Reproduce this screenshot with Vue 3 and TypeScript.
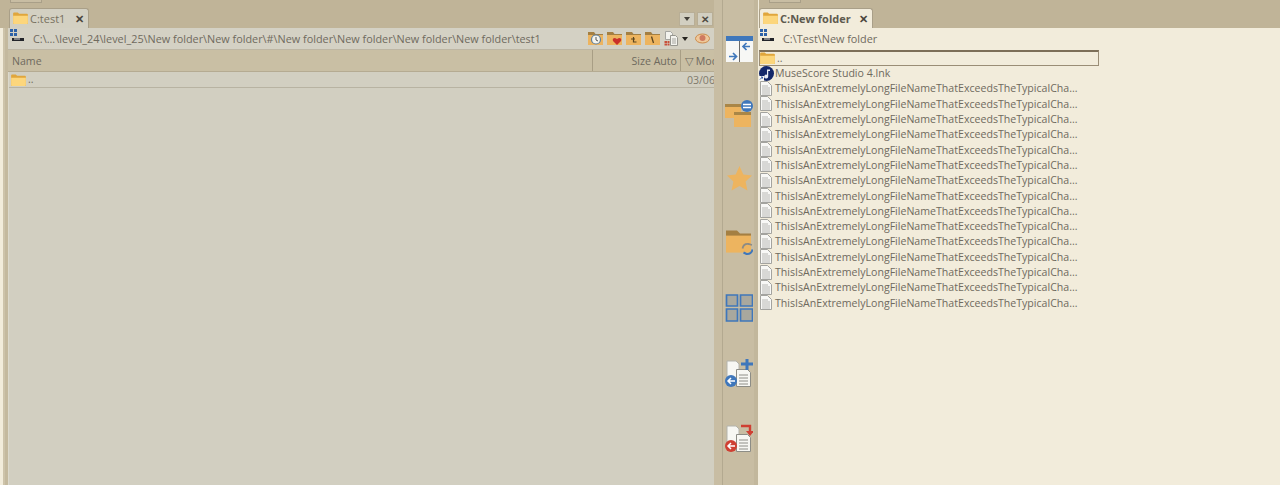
<script setup lang="ts">
const fileName = 'ThisIsAnExtremelyLongFileNameThatExceedsTheTypicalCha...'
const files = Array.from({ length: 15 }, (_, i) => ({ id: i, name: fileName }))
</script>

<template>
  <div class="app">
    <svg class="defs" width="0" height="0">
      <defs>
        <symbol id="folder" viewBox="0 0 16 13">
          <path d="M0 1.5Q0 .5 1 .5h4l1.500 1.500H15q1 0 1 1V12q0 1-1 1H1q-1 0-1-1z" fill="#e0a63c" />
          <path d="M0 4h16v8q0 1-1 1H1q-1 0-1-1z" fill="#fcd67c" />
        </symbol>
        <symbol id="doc" viewBox="0 0 12 15">
          <path d="M.5.5h7l4 4v10H.5z" fill="#f8f8f6" stroke="#a3a39f" />
          <path d="M2 5h6M2 7h8M2 9h8M2 11h8M2 13h8" stroke="#b8b8b5" />
        </symbol>
        <symbol id="tool-folder" viewBox="0 0 15 13">
          <path d="M0 0h6l1.500 2H15v2H0z" fill="#a47f42" />
          <path d="M0 3h15v10H0z" fill="#edb45f" />
        </symbol>
        <symbol id="drive" viewBox="0 0 14 14">
          <path d="M0 0h3v3H0zM4 0h3v3H4zM0 4h3v3H0zM4 4h3v3H4z" fill="#2e62a8" />
          <path d="M2 9h12v3H2z" fill="#22242a" />
          <path d="M4 10h6" stroke="#d9d9d9" />
        </symbol>
      </defs>
    </svg>

    <section class="pane left">
      <div class="tabbar">
        <span class="stub"></span>
        <div class="tab">
          <svg class="tab-folder"><use href="#folder" /></svg>
          <span>C:test1</span>
          <b class="close">✕</b>
        </div>
        <div class="win-buttons">
          <span class="win-btn"><i class="caret"></i></span>
          <span class="win-btn"><b>✕</b></span>
        </div>
      </div>

      <div class="pathbar">
        <svg class="drive"><use href="#drive" /></svg>
        <span class="path">C:\...\level_24\level_25\New folder\New folder\#\New folder\New folder\New folder\New folder\test1</span>
        <div class="tools">
          <svg class="tool" viewBox="0 0 15 13">
            <use href="#tool-folder" width="15" height="13" />
            <circle cx="8" cy="7.500" r="4.500" fill="#f4f4ee" stroke="#5e7f9c" stroke-width="1.200" />
            <path d="M8 5v3l2 1" fill="none" stroke="#555" />
          </svg>
          <svg class="tool" viewBox="0 0 15 13">
            <use href="#tool-folder" width="15" height="13" />
            <path d="M10 13 6 9q-1-3 2-3l2 1 2-1q3 0 2 3z" fill="#c9302a" />
          </svg>
          <svg class="tool" viewBox="0 0 15 13">
            <use href="#tool-folder" width="15" height="13" />
            <path d="M7.500 5v5h3M5 7h4" fill="none" stroke="#5a4520" stroke-width="1.200" />
          </svg>
          <svg class="tool" viewBox="0 0 15 13">
            <use href="#tool-folder" width="15" height="13" />
            <path d="M6.500 4.500 8.500 11" fill="none" stroke="#5a4520" stroke-width="1.300" />
          </svg>
          <svg class="tool docs" viewBox="0 0 15 15">
            <path d="M1.500.5h5l2 2v6h-7z" fill="#f3f3ee" stroke="#a5a5a0" />
            <path d="M6.500 4.500h5l2 2v8h-7z" fill="#f3f3ee" stroke="#96968f" />
            <path d="M8 8h4M8 10h4M8 12h4" stroke="#a5a5a0" />
            <path d="M.5 10h2.500v2H.5zM3.500 10h2v2h-2zM.5 12.500h2.500v2H.5zM3.500 12.500h2v2h-2z" fill="#c8503a" />
          </svg>
          <i class="caret small"></i>
          <svg class="tool eye" viewBox="0 0 15 11">
            <ellipse cx="7.500" cy="5.500" rx="7" ry="4.500" fill="#eec89a" stroke="#cc8a4a" />
            <circle cx="7.500" cy="5" r="3" fill="#cf7a60" />
          </svg>
        </div>
      </div>

      <div class="head">
        <span class="head-name">Name</span>
        <span class="head-size">Size Auto</span>
        <span class="head-mod">▽ Mod</span>
      </div>

      <div class="list-left">
        <div class="row-left">
          <svg class="row-folder"><use href="#folder" /></svg>
          <span class="dots">..</span>
          <span class="date">03/06</span>
        </div>
      </div>
    </section>

    <aside class="middle">
      <svg class="mid-icon" viewBox="0 0 28 28">
        <path d="M1 5h27v22H1z" fill="#f7f7f5" />
        <path d="M1 1h27v5H1z" fill="#3f77bb" />
        <path d="M14.500 6v21" stroke="#6a6a6a" />
        <path d="M4 21.500h7M8 18l3.500 3.500L8 25M25 11.500h-7M21.500 8 18 11.500l3.500 3.500" fill="none" stroke="#3f77bb" stroke-width="1.700" />
      </svg>
      <svg class="mid-icon" viewBox="0 0 28 28">
        <path d="M0 4h16v3H0zM9 12h17v3H9z" fill="#a98647" />
        <path d="M0 7h9v11H0zM9 7h7v5H9z" fill="#edb45f" />
        <path d="M9 15h17v12H9z" fill="#edb45f" />
        <circle cx="22" cy="6" r="6" fill="#3f77bb" />
        <path d="M18 4.500h8M18 7.500h8" stroke="#fff" stroke-width="1.600" />
      </svg>
      <svg class="mid-icon" viewBox="0 0 28 28">
        <path d="m14.500 1 3.800 8.400 8.700 1-6.400 6 1.800 9-7.900-4.400-7.900 4.400 1.800-9-6.400-6 8.700-1z" fill="#edb45f" />
      </svg>
      <svg class="mid-icon" viewBox="0 0 28 28">
        <path d="M1 1.600h11l3 3h11v4H1z" fill="#a47f42" />
        <path d="M1 6.600h25v17H1z" fill="#edb45f" />
        <path d="M17.500 19.500q1-5 6-4.500l3.500 1" fill="none" stroke="#8b8b86" stroke-width="1.800" />
        <path d="M27.500 20.500q-1 5-6 4.500l-3-1.500" fill="none" stroke="#3f77bb" stroke-width="2" />
      </svg>
      <svg class="mid-icon" viewBox="0 0 28 28">
        <path d="M1.500 1h11v11h-11zM15.500 1h12v11h-12zM1.500 15h11v12h-11zM15.500 15h12v12h-12z" fill="#a9a89e" stroke="#3f77bb" stroke-width="1.700" />
      </svg>
      <svg class="mid-icon" viewBox="0 0 28 28">
        <path d="M2 2h9l3 3v15H2z" fill="#f7f7f3" stroke="#b3b3ac" />
        <path d="M11.500 10.500h11l3 3v14h-14z" fill="#f7f7f3" stroke="#8d8d86" />
        <path d="M14 16h9M14 19h9M14 22h9M14 25h9" stroke="#8e8e88" />
        <path d="M16 5h12M22 0v11" stroke="#3f77bb" stroke-width="3" />
        <circle cx="6" cy="22" r="6" fill="#3f77bb" />
        <path d="M10 22H3M6 19l-3 3 3 3" fill="none" stroke="#fff" stroke-width="1.500" />
      </svg>
      <svg class="mid-icon" viewBox="0 0 28 28">
        <path d="M2 2h9l3 3v15H2z" fill="#f7f7f3" stroke="#b3b3ac" />
        <path d="M11.500 10.500h11l3 3v14h-14z" fill="#f7f7f3" stroke="#8d8d86" />
        <path d="M14 16h9M14 19h9M14 22h9M14 25h9" stroke="#8e8e88" />
        <path d="M16 2h9v6" fill="none" stroke="#cf4033" stroke-width="2.400" />
        <path d="m21 7 4 5 4-5z" fill="#cf4033" />
        <circle cx="6" cy="22" r="6" fill="#cf4033" />
        <path d="M10 22H3M6 19l-3 3 3 3" fill="none" stroke="#fff" stroke-width="1.500" />
      </svg>
    </aside>

    <section class="pane right">
      <div class="tabbar">
        <span class="stub"></span>
        <div class="tab active">
          <svg class="tab-folder"><use href="#folder" /></svg>
          <strong>C:New folder</strong>
          <b class="close">✕</b>
        </div>
      </div>
      <div class="pathbar light">
        <svg class="drive"><use href="#drive" /></svg>
        <span class="path">C:\Test\New folder</span>
      </div>
      <div class="list-right">
        <div class="file selected">
          <svg class="row-folder"><use href="#folder" /></svg>
          <span class="dots">..</span>
        </div>
        <div class="file">
          <svg class="file-icon big" viewBox="0 0 15 15">
            <circle cx="7.500" cy="7.500" r="7.500" fill="#14286a" />
            <path d="M8 3.500h3V5H9.200v5.500a2 2 0 1 1-1.200-1.800z" fill="#e8edf5" />
            <path d="M0 10h5v5H0z" fill="#f6f6f2" />
            <path d="m1 13.500 2.500-2.500M2 11h1.500v1.500" fill="none" stroke="#3157a5" />
          </svg>
          <span>MuseScore Studio 4.lnk</span>
        </div>
        <div v-for="file in files" :key="file.id" class="file">
          <svg class="file-icon"><use href="#doc" /></svg>
          <span>{{ file.name }}</span>
        </div>
      </div>
    </section>
  </div>
</template>

<style scoped>
.app {
  width: 1280px;
  height: 485px;
  display: flex;
  overflow: hidden;
  background: #c0b498;
  color: #6f6a5e;
  font-family: "Open Sans", "Liberation Sans", sans-serif;
  font-size: 10.6px;
}
.defs {
  position: absolute;
}
.pane {
  display: flex;
  flex-direction: column;
  height: 485px;
}
.left {
  width: 714px;
  padding-left: 8px;
  box-sizing: border-box;
  background: linear-gradient(90deg, #f2ecdb 0 3px, #cdc3aa 3px 5px, #c4b99e 5px 8px);
}
.right {
  width: 521px;
  background: #f2ecdb;
}
.tabbar {
  position: relative;
  height: 28px;
  flex: none;
  display: flex;
  align-items: flex-end;
  justify-content: space-between;
  margin-left: -8px;
  padding-left: 9px;
  box-sizing: border-box;
  background: #c0b498;
}
.right .tabbar {
  margin-left: 0;
  padding-left: 0;
}
.stub {
  position: absolute;
  left: 10px;
  top: 0;
  width: 32px;
  height: 3px;
  background: #c8bda3;
  border: 1px solid #a99f88;
  border-top: none;
  box-sizing: border-box;
}
.tab {
  width: 80px;
  height: 20px;
  display: flex;
  align-items: center;
  padding: 0 0 1px 3px;
  box-sizing: border-box;
  background: #d3d0c2;
  border: 1px solid #a99f88;
  border-bottom: none;
  border-radius: 3px 3px 0 0;
  font-size: 11px;
  color: #77715f;
}
.tab.active {
  width: 114px;
  background: #f2ecdb;
  color: #5e5a4e;
}
.tab strong {
  font-size: 11px;
}
.tab-folder {
  width: 15px;
  height: 12px;
  margin-right: 2px;
}
.close {
  margin-left: auto;
  margin-right: 4px;
  font-size: 11px;
  color: #4a463c;
}
.win-buttons {
  display: flex;
  gap: 2px;
  height: 14px;
  margin-bottom: 2px;
  padding-right: 1px;
}
.win-btn {
  width: 16px;
  height: 14px;
  display: flex;
  align-items: center;
  justify-content: center;
  background: #d2cfc1;
  border: 1px solid #b8ae96;
  box-sizing: border-box;
  font-size: 10px;
  color: #4f4b42;
}
.caret {
  display: inline-block;
  width: 0;
  height: 0;
  border: 3.500px solid transparent;
  border-top: 4px solid #44413a;
  border-bottom: none;
}
.caret.small {
  margin: 0 3px 0 -1px;
  border-top-color: #26241f;
}
.pathbar {
  height: 22px;
  flex: none;
  display: flex;
  align-items: center;
  padding-left: 2px;
  box-sizing: border-box;
  background: #d4d1c4;
  border-bottom: 1px solid #bdb6a4;
  font-size: 10.85px;
}
.pathbar.light {
  padding: 0 0 1px 1px;
  background: #f2ecdb;
  border-bottom: none;
}
.drive {
  width: 14px;
  height: 14px;
  margin-top: -5px;
}
.path {
  margin-left: 9px;
  white-space: nowrap;
}
.tools {
  margin-left: auto;
  display: flex;
  align-items: center;
  gap: 4px;
  padding-right: 4px;
}
.tool {
  width: 15px;
  height: 13px;
}
.tool.docs {
  height: 15px;
}
.tool.eye {
  height: 11px;
}
.head {
  height: 22px;
  flex: none;
  display: flex;
  align-items: center;
  box-sizing: border-box;
  background: #c9bfa4;
  border-bottom: 1px solid #b5ab92;
}
.head-name {
  flex: 1;
  padding-left: 4px;
}
.head-size {
  width: 89px;
  height: 100%;
  line-height: 22px;
  text-align: right;
  padding-right: 3px;
  box-sizing: border-box;
  border-left: 1px solid #a89e85;
  border-right: 1px solid #a89e85;
}
.head-mod {
  width: 33px;
  padding-left: 4px;
  box-sizing: border-box;
  white-space: nowrap;
  overflow: hidden;
}
.list-left {
  flex: 1;
  background: #d2cfc1;
  border-left: 1px solid #dcd9cc;
}
.row-left {
  height: 16px;
  display: flex;
  align-items: center;
  box-sizing: border-box;
  padding-left: 2px;
  border-bottom: 1px solid #b8b3a2;
}
.row-folder {
  width: 15px;
  height: 12px;
}
.dots {
  margin-left: 2px;
  line-height: 1;
}
.date {
  margin-left: auto;
  margin-right: -1px;
  color: #807a6c;
}
.middle {
  width: 45px;
  height: 485px;
  flex: none;
  padding: 35px 0 0 11px;
  box-sizing: border-box;
  display: flex;
  flex-direction: column;
  gap: 36.800px;
  background: linear-gradient(90deg, #c8bda3 0 8px, #b3a990 8px 9px, #c8bda3 9px 40px, #c2b79c 40px 44px, #f2ecdb 44px);
}
.mid-icon {
  width: 28px;
  height: 28px;
  flex: none;
}
.list-right {
  flex: 1;
}
.file {
  height: 15.3px;
  display: flex;
  align-items: center;
  white-space: nowrap;
  color: #6f6a5e;
}
.file.selected {
  width: 340px;
  height: 15.5px;
  box-sizing: border-box;
  border: 1px solid #9a8d76;
  border-top: 2px solid #7d6f58;
}
.file-icon {
  width: 12px;
  height: 15px;
  margin: 0 3px 0 1px;
  flex: none;
}
.file-icon.big {
  width: 15px;
  margin: 0 1px 0 0;
}
</style>
